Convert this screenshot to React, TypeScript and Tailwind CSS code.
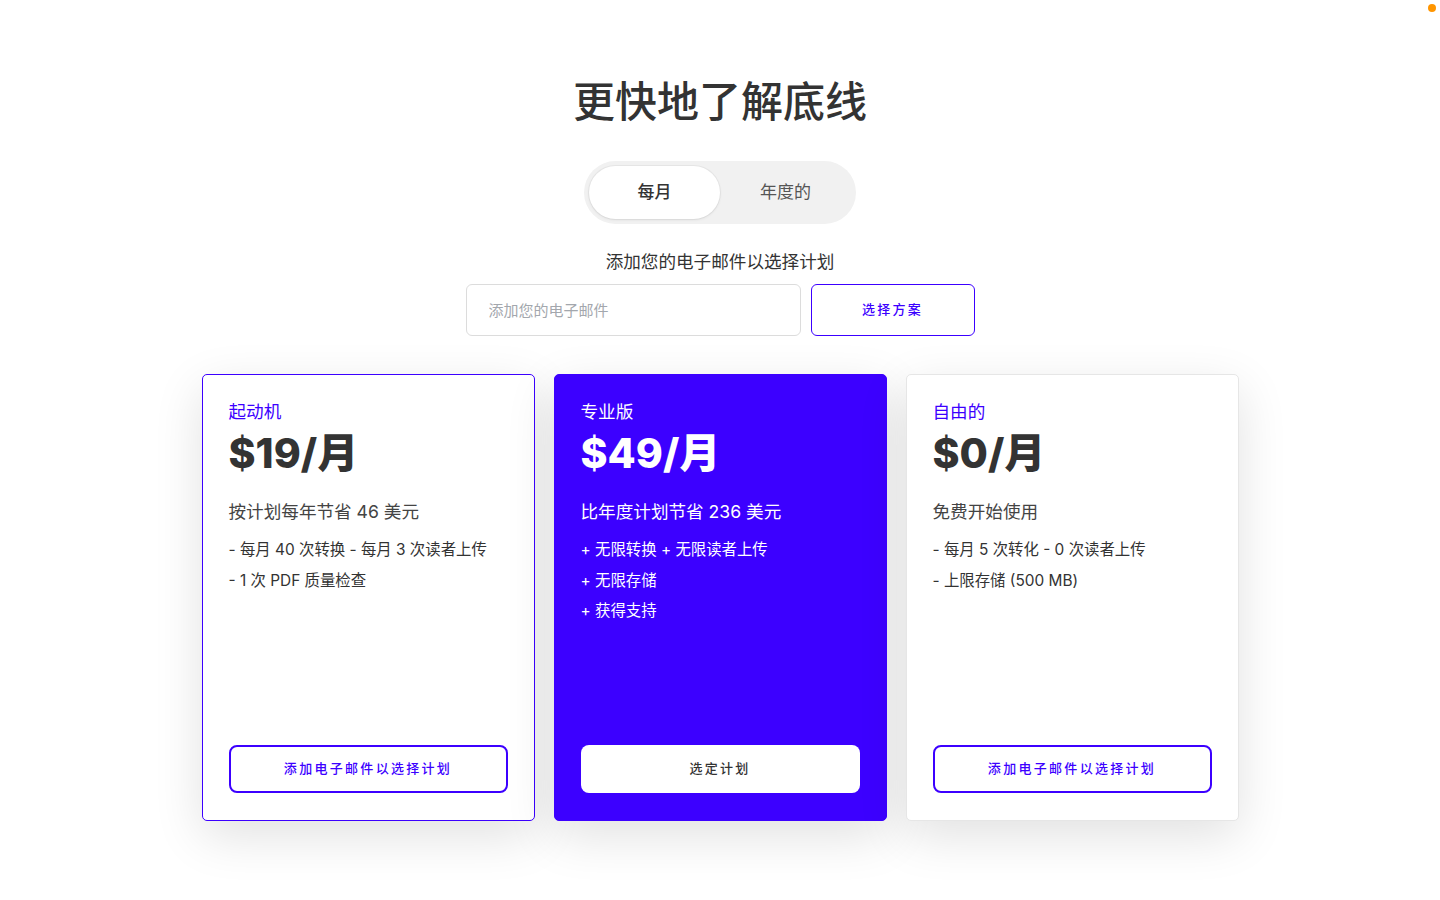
import React from "react";

const font = { fontFamily: 'Inter, "Noto Sans CJK SC", "Noto Sans", sans-serif' };

interface Plan {
  name: string;
  price: string;
  note: string;
  features: string[];
  cta: string;
  featured?: boolean;
  outlined?: boolean;
}

const plans: Plan[] = [
  {
    name: "起动机",
    price: "$19/月",
    note: "按计划每年节省 46 美元",
    features: ["- 每月 40 次转换 - 每月 3 次读者上传", "- 1 次 PDF 质量检查"],
    cta: "添加电子邮件以选择计划",
    outlined: true,
  },
  {
    name: "专业版",
    price: "$49/月",
    note: "比年度计划节省 236 美元",
    features: ["+ 无限转换 + 无限读者上传", "+ 无限存储", "+ 获得支持"],
    cta: "选定计划",
    featured: true,
  },
  {
    name: "自由的",
    price: "$0/月",
    note: "免费开始使用",
    features: ["- 每月 5 次转化 - 0 次读者上传", "- 上限存储 (500 MB)"],
    cta: "添加电子邮件以选择计划",
  },
];

function PlanCard({ plan }: { plan: Plan }) {
  if (plan.featured) {
    return (
      <div className="flex h-[447px] flex-col rounded-[5px] border border-[#3c00ff] bg-[#3c00ff] px-[26px] pb-[27px] pt-[25px] shadow-[0_15px_50px_rgba(0,0,0,0.12)]">
        <div className="text-[17.6px] leading-6 text-white">{plan.name}</div>
        <div className="mt-[5px] text-[41px] leading-[48px] font-extrabold text-white">{plan.price}</div>
        <div className="mt-[22px] text-[17.6px] leading-[26px] text-white">{plan.note}</div>
        <div className="mt-[10px] flex flex-col">
          {plan.features.map((f) => (
            <div key={f} className="text-[15.4px] leading-[30.5px] text-white">
              {f}
            </div>
          ))}
        </div>
        <button className="mt-auto h-12 w-full rounded-lg bg-white text-[13px] font-medium tracking-[2.3px] text-[#333]">
          {plan.cta}
        </button>
      </div>
    );
  }
  return (
    <div
      className={
        plan.outlined
          ? "flex h-[447px] flex-col rounded-[5px] border border-[#3c00ff] bg-white px-[26px] pb-[27px] pt-[25px] shadow-[0_15px_50px_rgba(0,0,0,0.12)]"
          : "flex h-[447px] flex-col rounded-[5px] border border-[#e6e6e6] bg-white px-[26px] pb-[27px] pt-[25px] shadow-[0_15px_50px_rgba(0,0,0,0.12)]"
      }
    >
      <div className="text-[17.6px] leading-6 text-[#3c00ff]">{plan.name}</div>
      <div className="mt-[5px] text-[41px] leading-[48px] font-extrabold text-[#333]">{plan.price}</div>
      <div className="mt-[22px] text-[17.6px] leading-[26px] text-[#444]">{plan.note}</div>
      <div className="mt-[10px] flex flex-col">
        {plan.features.map((f) => (
          <div key={f} className="text-[15.4px] leading-[30.5px] text-[#333]">
            {f}
          </div>
        ))}
      </div>
      <button className="mt-auto h-12 w-full rounded-lg border-2 border-[#3c00ff] bg-white text-[13px] font-medium tracking-[2.3px] text-[#3c00ff]">
        {plan.cta}
      </button>
    </div>
  );
}

export default function App() {
  return (
    <div className="relative min-h-[900px] w-full bg-white" style={font}>
      <div className="absolute left-[1428px] top-[4px] h-2 w-2 rounded-full bg-[#ff9500]" />

      <div className="flex flex-col items-center pt-[77px]">
        <h1 className="text-[42px] leading-[50px] font-medium text-[#333]">更快地了解底线</h1>

        <div className="mt-[34px] grid h-[63px] w-[272px] grid-cols-2 rounded-full bg-[#f1f1f1] p-[5px]">
          <div className="flex items-center justify-center rounded-full bg-white text-[17px] font-medium text-[#333] shadow-[0_0_0_1px_rgba(0,0,0,0.04),0_1px_3px_rgba(0,0,0,0.08)]">
            每月
          </div>
          <div className="flex items-center justify-center text-[17px] text-[#555]">年度的</div>
        </div>

        <p className="mt-[26px] text-[17.6px] leading-6 text-[#333]">添加您的电子邮件以选择计划</p>

        <div className="mt-[10px] flex gap-[10px]">
          <input
            className="h-[52px] w-[335px] rounded-md border border-[#dcdcdc] px-[22px] text-[15px] text-[#333] outline-none placeholder:text-[#a3a7ad]"
            placeholder="添加您的电子邮件"
          />
          <button className="h-[52px] w-[164px] rounded-md border border-[#3c00ff] bg-white text-[13px] font-medium tracking-[2.3px] text-[#3c00ff]">
            选择方案
          </button>
        </div>

        <div className="mt-[38px] grid w-[1037px] grid-cols-3 gap-[19px] pb-[79px]">
          {plans.map((p) => (
            <PlanCard key={p.name} plan={p} />
          ))}
        </div>
      </div>
    </div>
  );
}
